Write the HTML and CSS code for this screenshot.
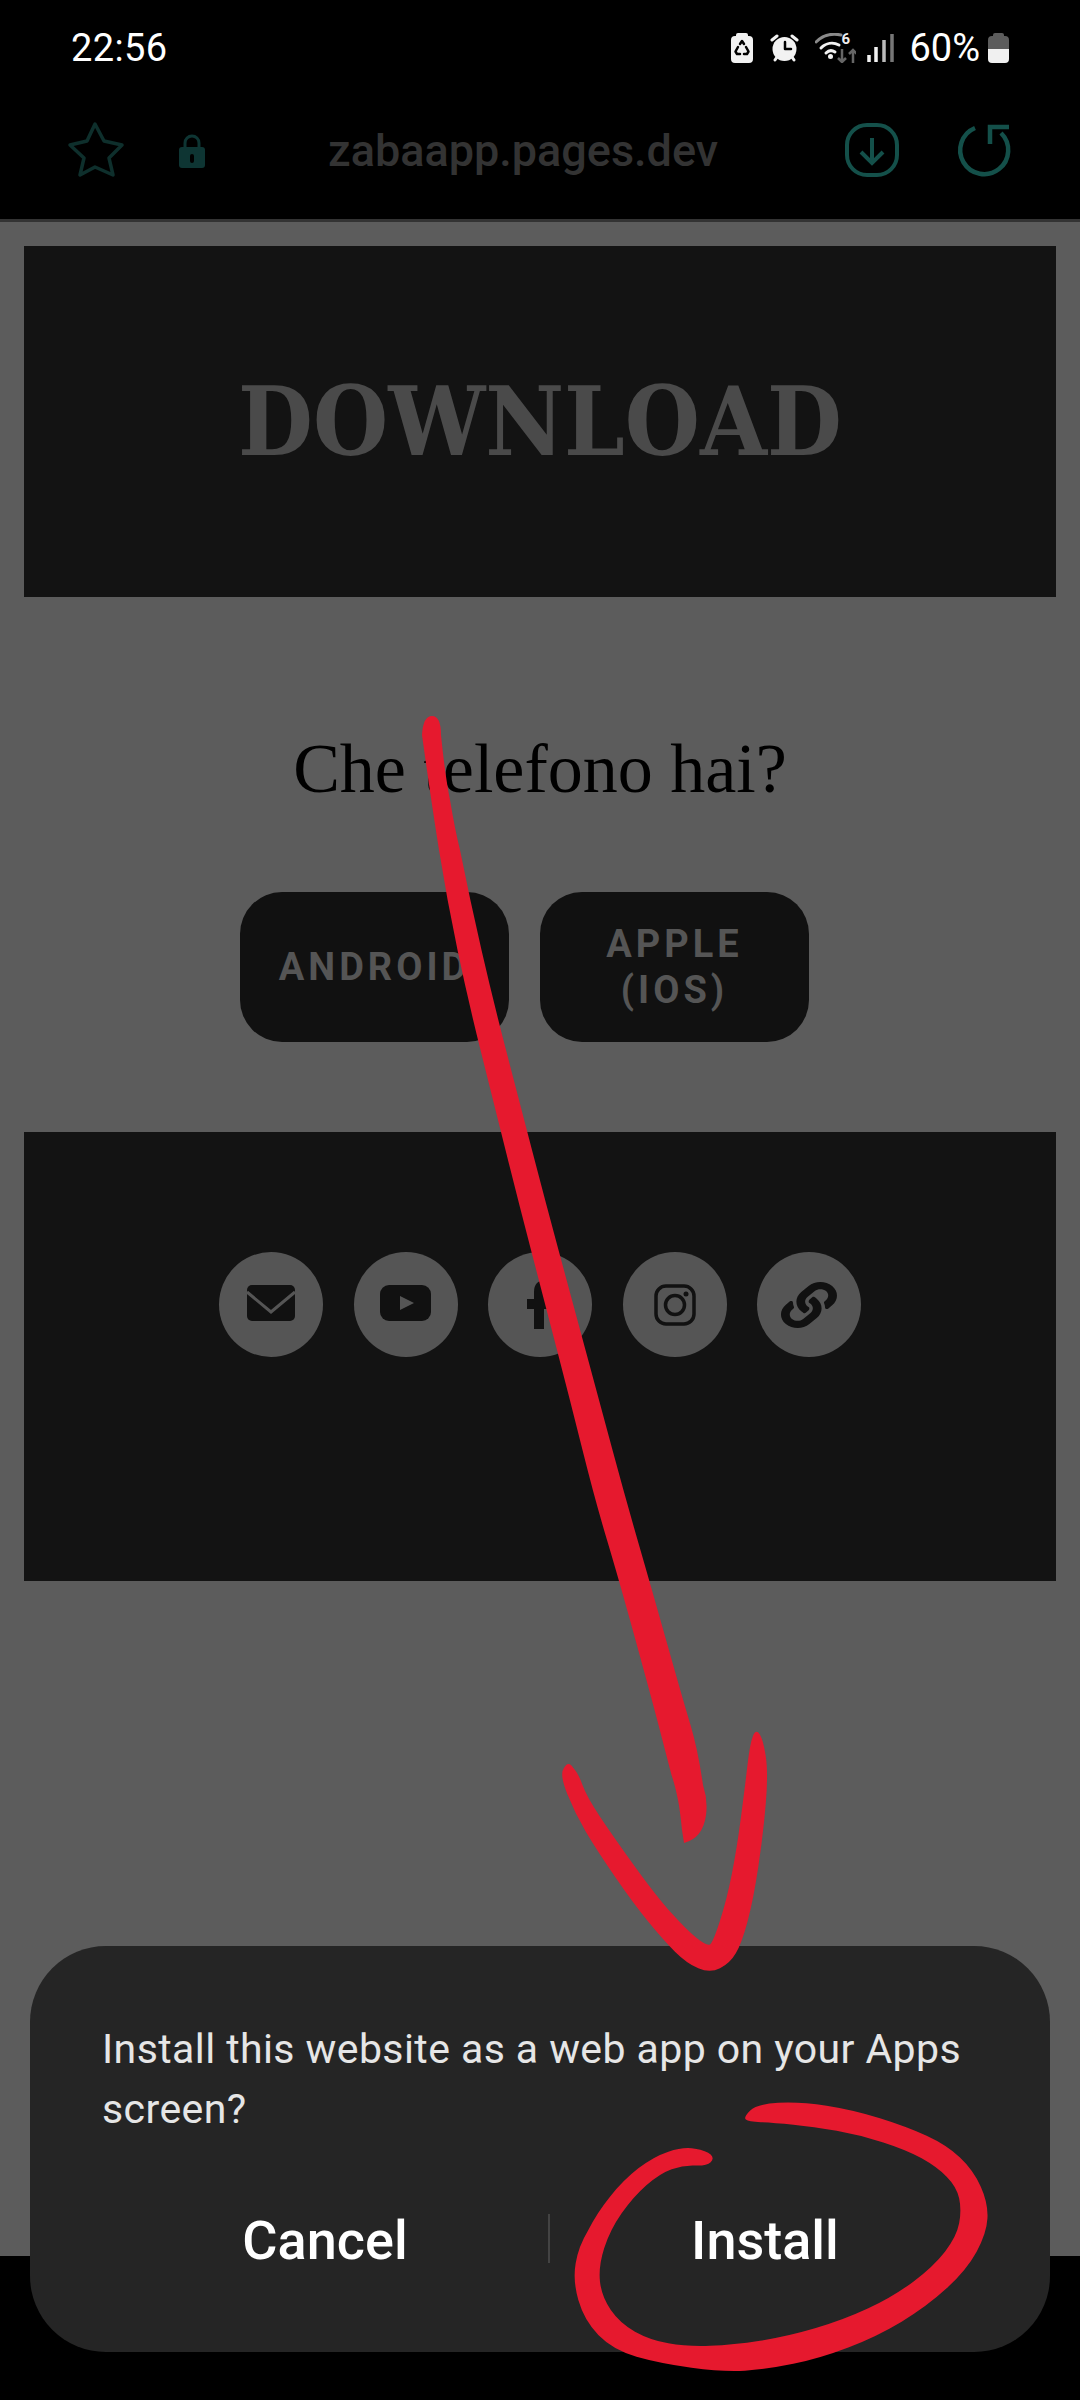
FILE: index.html
```html
<!DOCTYPE html>
<html lang="it">
<head>
<meta charset="utf-8">
<title>zabaapp.pages.dev</title>
<link rel="stylesheet" href="styles.css">
</head>
<body>
<div class="screen">
  <header class="status">
    <span class="time">22:56</span>
    <div class="status-icons">
      <svg class="si-saver" viewBox="0 0 22 30"><path class="w" d="M7 0h8a2 2 0 0 1 2 2v1h1a4 4 0 0 1 4 4v19a4 4 0 0 1-4 4H4a4 4 0 0 1-4-4V7a4 4 0 0 1 4-4h1V2a2 2 0 0 1 2-2z"/><path class="k-line" d="M9 11l2-3 2 3M15 14l2.500 4.500-1.500 2.500h-3M9 21H6l-1.500-2.500L7 14"/></svg>
      <svg class="si-alarm" viewBox="0 0 29 28"><circle class="w" cx="14.500" cy="15" r="12"/><path class="k-line" d="M15 8v7h6"/><path class="w-line" d="M2 6l5-4M27 6l-5-4M5 26l2-3M24 26l-2-3"/></svg>
      <span class="wifi-group">
        <svg class="si-wifi" viewBox="0 0 41 30"><path class="g1-line" d="M1 9C8 2 17 0 26 2"/><path class="w-line" d="M6 15c5-5 12-6 18-3M11 20c3-3 6-3 9-1"/><circle class="w" cx="15.500" cy="23.500" r="2.500"/><path class="g2-line" d="M27 16v13M23 25l4 4 4-4M38 30V17M34 21l4-4 4 4"/></svg>
        <span class="wifi-six">6</span>
      </span>
      <svg class="si-signal" viewBox="0 0 27 30"><path class="w-bar" d="M2 29v-7M9 29V14"/><path class="g1-bar" d="M17 29V7"/><path class="g2-bar" d="M25 29V1"/></svg>
      <span class="pct">60%</span>
      <svg class="si-batt" viewBox="0 0 21 30"><path class="batt-top" d="M7 0h7a2 2 0 0 1 2 2v1h1a4 4 0 0 1 4 4v9H0V7a4 4 0 0 1 4-4h1V2a2 2 0 0 1 2-2z"/><path class="batt-bot" d="M0 16h21v10a4 4 0 0 1-4 4H4a4 4 0 0 1-4-4z"/></svg>
    </div>
  </header>

  <nav class="toolbar">
    <svg class="tb-star" viewBox="0 0 56 55"><path d="M27 2l9 17 18 4-13 13 4 17-18-8-15 8 4-17L2 23l17-4z"/></svg>
    <svg class="tb-lock" viewBox="0 0 28 35"><path class="shackle" d="M7 17V10a7 7 0 0 1 14 0v7"/><rect class="lock-body" x="1" y="14" width="26" height="21" rx="3"/><rect class="keyhole" x="12" y="21" width="4" height="9" rx="2"/></svg>
    <span class="url">zabaapp.pages.dev</span>
    <svg class="tb-dl" viewBox="0 0 54 54"><rect x="2" y="2" width="50" height="50" rx="20"/><path d="M27 15v24M16 29l11 11 11-11"/></svg>
    <svg class="tb-reload" viewBox="0 0 52 50"><path d="M17 3A24 24 0 1 0 43 8"/><path d="M51 2H32v17"/></svg>
  </nav>

  <main class="page">
    <section class="hero"><h1 class="hero-title">DOWNLOAD</h1></section>
    <h2 class="question">Che telefono hai?</h2>
    <div class="choices">
      <a class="choice">ANDROID</a>
      <a class="choice">APPLE (IOS)</a>
    </div>
    <section class="social">
      <a class="bubble"><svg class="ic-mail" viewBox="0 0 48 36"><rect class="ic-fill" width="48" height="36" rx="5"/><path class="ic-cut" d="M0 7l24 20L48 7"/></svg></a>
      <a class="bubble"><svg class="ic-yt" viewBox="0 0 51 36"><rect class="ic-fill" width="51" height="36" rx="9"/><path class="ic-tri" d="M20 11l14 7-14 7z"/></svg></a>
      <a class="bubble"><svg class="ic-fb" viewBox="0 0 26 49"><path class="ic-fill" d="M7 49V29H0V19h7v-7Q7 0 19 0h7v10h-5q-4 0-4 4v5h9l-2 10h-7v20z"/></svg></a>
      <a class="bubble"><svg class="ic-ig" viewBox="0 0 42 42"><rect class="ic-stroke" x="2" y="2" width="38" height="38" rx="10"/><circle class="ic-stroke" cx="21" cy="21" r="9.500"/><circle class="ic-fill" cx="32" cy="10" r="2.500"/></svg></a>
      <a class="bubble"><svg class="ic-link" viewBox="0 0 512 512" preserveAspectRatio="none"><path class="ic-fill" d="M326.612 185.391c59.747 59.809 58.927 155.698.36 214.59-.11.12-.24.25-.36.37l-67.2 67.2c-59.27 59.27-155.699 59.262-214.96 0-59.27-59.26-59.27-155.7 0-214.96l37.106-37.106c9.84-9.84 26.786-3.3 27.294 10.606.648 17.722 3.826 35.527 9.69 52.721 1.986 5.822.567 12.262-3.783 16.612l-13.087 13.087c-28.026 28.026-28.905 73.66-1.155 101.96 28.024 28.579 74.086 28.749 102.325.51l67.2-67.19c28.191-28.191 28.073-73.757 0-101.83-3.701-3.694-7.429-6.564-10.341-8.569a16.037 16.037 0 0 1-6.947-12.606c-.396-10.567 3.348-21.456 11.698-29.806l21.054-21.055c5.521-5.521 14.182-6.199 20.584-1.731a152.482 152.482 0 0 1 20.522 17.197zM467.547 44.449c-59.261-59.262-155.69-59.27-214.96 0l-67.2 67.2c-.12.12-.25.25-.36.37-58.566 58.892-59.387 154.781.36 214.59a152.454 152.454 0 0 0 20.521 17.196c6.402 4.468 15.064 3.789 20.584-1.731l21.054-21.055c8.35-8.35 12.094-19.239 11.698-29.806a16.037 16.037 0 0 0-6.947-12.606c-2.912-2.005-6.64-4.875-10.341-8.569-28.073-28.073-28.191-73.639 0-101.83l67.2-67.19c28.239-28.239 74.3-28.069 102.325.51 27.75 28.3 26.872 73.934-1.155 101.96l-13.087 13.087c-4.35 4.35-5.769 10.79-3.783 16.612 5.864 17.194 9.042 34.999 9.69 52.721.509 13.906 17.454 20.446 27.294 10.606l37.106-37.106c59.271-59.259 59.271-155.699.001-214.959z"/></svg></a>
    </section>
  </main>

  <aside class="dialog">
    <p class="dialog-text">Install this website as a web app on your Apps screen?</p>
    <div class="dialog-actions">
      <button class="dialog-btn">Cancel</button>
      <span class="dialog-sep"></span>
      <button class="dialog-btn">Install</button>
    </div>
  </aside>

  <svg class="ink" viewBox="0 0 1080 2400">
    <path d="M422 735Q423 716 432 716Q441 716 441 735Q445 775 450 800Q455 830 460 850Q470 900 481.500 950Q493 1000 506 1050Q519 1100 532 1150Q545 1200 558.500 1250Q572 1300 585.500 1350Q599 1400 612.500 1450Q626 1500 639 1545Q652 1590 667.500 1645Q683 1700 690.500 1725Q698 1750 703 1785Q708 1800 706 1815Q703 1838 684 1843L682 1830Q680 1810 678 1800Q675 1785 671.500 1775Q665 1750 658.500 1725Q652 1700 635.500 1640Q619 1580 607 1540Q595 1500 582.500 1450Q570 1400 557 1350Q544 1300 531 1250Q518 1200 505.500 1150Q493 1100 480.500 1050Q468 1000 457.500 950Q447 900 439 850Q431 800 422 735Z"/>
    <g transform="translate(500 1700) scale(.3333)">
      <path d="M220 204Q205 180 191.500 205Q178 222 201.500 281Q225 340 257.500 395Q290 450 345 530Q400 610 445 665Q490 720 525 755Q560 790 595 805Q630 820 660 805Q690 790 707.500 760Q725 730 742.500 665Q760 600 775 500Q790 400 797.500 310Q805 220 797.500 170Q790 120 779 103Q768 86 759 108Q750 130 742.500 195Q735 260 722.500 355Q710 450 695 525Q680 600 660 662.500Q640 725 631 732.500Q622 740 591 715Q560 690 515 640Q470 590 405 500Q340 410 300 350Q260 290 247.500 255Q235 220 220 204Z"/>
    </g>
    <g transform="translate(560 2080) scale(.3333)">
      <path d="M557.500 118.500Q550 112 570 92Q590 72 655 68.500Q720 65 800 77.500Q880 90 960 115Q1040 140 1100 167.500Q1160 195 1200 232.500Q1240 270 1262.500 320Q1285 370 1282.500 415Q1280 460 1250 515Q1220 570 1160 625Q1100 680 1025 725Q950 770 865 802.500Q780 835 700 851.500Q620 868 554.500 872Q489 876 394.500 863Q300 850 229.500 830Q159 810 115 765Q72 720 55 660Q38 600 47 550Q55 500 85 450Q110 400 150 350Q190 300 235 265Q280 230 325 215Q370 200 405 206Q440 212 452 223.500Q464 235 452 246.500Q440 258 405 256.500Q370 255 335 267.500Q300 280 260 315Q220 350 185 400Q150 450 132.500 505Q115 560 120 605Q125 650 152.500 690Q180 730 225 755Q270 780 325 790Q380 800 450 797.500Q520 795 600 782.500Q680 770 765 745Q850 720 925 685Q1000 650 1060 605Q1120 560 1155 515Q1190 470 1197.500 430Q1205 390 1197.500 355Q1190 320 1160 290Q1130 260 1085 235Q1040 210 970 187.500Q900 165 830 152.500Q760 140 700 134Q640 128 602.500 126.500Q565 125 557.500 118.500Z"/>
    </g>
  </svg>
</div>
</body>
</html>
```

FILE: styles.css
```css
* { box-sizing: border-box; }
html, body { margin: 0; padding: 0; background: #000; }
.screen {
  position: relative;
  width: 1080px;
  height: 2400px;
  overflow: hidden;
  display: flex;
  flex-direction: column;
  background: #000;
  font-family: Roboto, "Liberation Sans", sans-serif;
}

/* status bar */
.status {
  height: 96px;
  padding: 23px 71px 0 71px;
  display: flex;
  justify-content: space-between;
  align-items: flex-start;
  color: #fff;
}
.time { font-size: 38px; line-height: 50px; letter-spacing: .4px; }
.status-icons { display: flex; align-items: flex-start; margin-top: 10px; }
.status-icons svg { display: block; }
.si-saver { width: 22px; height: 30px; }
.si-alarm { width: 29px; height: 28px; margin-left: 17px; margin-top: 1px; }
.wifi-group { position: relative; display: block; width: 41px; height: 30px; margin-left: 16px; }
.si-wifi { width: 41px; height: 30px; }
.wifi-six { position: absolute; left: 26px; top: -2px; font-size: 15px; line-height: 16px; font-weight: 700; color: #eee; }
.si-signal { width: 27px; height: 30px; margin-left: 11px; }
.pct { font-size: 38px; line-height: 50px; margin-left: 15px; margin-top: -10px; }
.si-batt { width: 21px; height: 30px; margin-left: 8px; }
.w { fill: #f2f2f2; }
.w-line { fill: none; stroke: #f2f2f2; stroke-width: 3; stroke-linecap: round; }
.k-line { fill: none; stroke: #000; stroke-width: 2.500; stroke-linecap: round; stroke-linejoin: round; }
.g1-line { fill: none; stroke: #8a8a8a; stroke-width: 3; stroke-linecap: round; }
.g2-line { fill: none; stroke: #666; stroke-width: 2.500; }
.w-bar { fill: none; stroke: #f2f2f2; stroke-width: 3.500; }
.g1-bar { fill: none; stroke: #bbb; stroke-width: 3.500; }
.g2-bar { fill: none; stroke: #777; stroke-width: 3.500; }
.batt-top { fill: #5c5c5c; }
.batt-bot { fill: #f0f0f0; }

/* toolbar */
.toolbar {
  height: 126px;
  border-bottom: 3px solid #333;
  display: flex;
  align-items: flex-start;
  padding: 26px 70px 0 68px;
}
.toolbar svg { display: block; overflow: visible; flex: none; }
.tb-star { width: 56px; height: 55px; }
.tb-star path { fill: none; stroke: #0e2f2c; stroke-width: 3.500; stroke-linejoin: round; }
.tb-lock { width: 28px; height: 35px; margin-left: 54px; margin-top: 11px; }
.shackle { fill: none; stroke: #0e3533; stroke-width: 3; }
.lock-body { fill: #0e3533; }
.keyhole { fill: #000; }
.url {
  margin-left: 122px;
  margin-top: 3px;
  font-size: 45px;
  line-height: 52px;
  font-weight: 500;
  color: #333;
}
.tb-dl { width: 54px; height: 54px; margin-left: auto; margin-top: 1px; }
.tb-dl rect, .tb-dl path { fill: none; stroke: #14504a; stroke-width: 4; }
.tb-reload { width: 52px; height: 50px; margin-left: 59px; margin-top: 3px; }
.tb-reload path { fill: none; stroke: #14504a; stroke-width: 4.500; }

/* page */
.page {
  height: 2034px;
  background: #5c5c5c;
  padding: 24px 24px 0;
  display: flex;
  flex-direction: column;
}
.hero {
  height: 351px;
  background: #131313;
  display: flex;
  align-items: center;
  justify-content: center;
}
.hero-title {
  margin: 0;
  font-family: "DejaVu Serif", "Liberation Serif", serif;
  font-stretch: condensed;
  font-size: 96px;
  line-height: 96px;
  font-weight: 700;
  letter-spacing: 0;
  color: #4a4a4a;
}
.question {
  margin: 137px 0 0;
  font-family: "Liberation Serif", serif;
  font-size: 70px;
  line-height: 70px;
  font-weight: 400;
  color: #000;
  text-align: center;
}
.choices {
  margin-top: 88px;
  display: flex;
  justify-content: center;
}
.choice {
  width: 269px;
  height: 150px;
  margin-right: 31px;
  padding: 0 32px;
  border-radius: 42px;
  background: #111;
  color: #555;
  display: flex;
  align-items: center;
  justify-content: center;
  text-align: center;
  font-size: 38px;
  line-height: 46px;
  font-weight: 700;
  letter-spacing: 4px;
}
.social {
  margin-top: 90px;
  height: 449px;
  background: #131313;
  padding-top: 120px;
  display: flex;
  justify-content: center;
  align-items: flex-start;
  gap: 30.500px;
}
.bubble {
  width: 104px;
  height: 105px;
  border-radius: 50%;
  background: #555;
  display: flex;
  align-items: center;
  justify-content: center;
}
.bubble svg { display: block; overflow: visible; }
.ic-mail { width: 48px; height: 36px; margin-top: -3px; }
.ic-yt { width: 51px; height: 36px; margin-top: -3px; }
.ic-fb { width: 26px; height: 49px; }
.ic-ig { width: 42px; height: 42px; }
.ic-link { width: 56px; height: 46px; }
.ic-fill { fill: #111; }
.ic-cut { fill: none; stroke: #555; stroke-width: 3; }
.ic-tri { fill: #555; }
.ic-stroke { fill: none; stroke: #111; stroke-width: 3.500; }

/* dialog */
.dialog {
  position: absolute;
  left: 30px;
  top: 1946px;
  width: 1020px;
  height: 406px;
  padding: 73px 70px 0 72px;
  border-radius: 76px;
  background: #252525;
}
.dialog-text {
  margin: 0;
  font-size: 41px;
  line-height: 60px;
  color: #e6e6e6;
  letter-spacing: .42px;
}
.dialog-actions {
  margin-top: 72px;
  display: grid;
  grid-template-columns: 446px 2px 1fr;
  align-items: start;
}
.dialog-btn {
  padding: 0;
  border: 0;
  background: none;
  color: #fff;
  font-family: inherit;
  font-size: 54px;
  line-height: 60px;
  font-weight: 500;
}
.dialog-sep { height: 49px; margin-top: 3px; background: #434343; }

/* hand-drawn annotation */
.ink { position: absolute; left: 0; top: 0; width: 1080px; height: 2400px; pointer-events: none; }
.ink path { fill: #e6192e; }
```
